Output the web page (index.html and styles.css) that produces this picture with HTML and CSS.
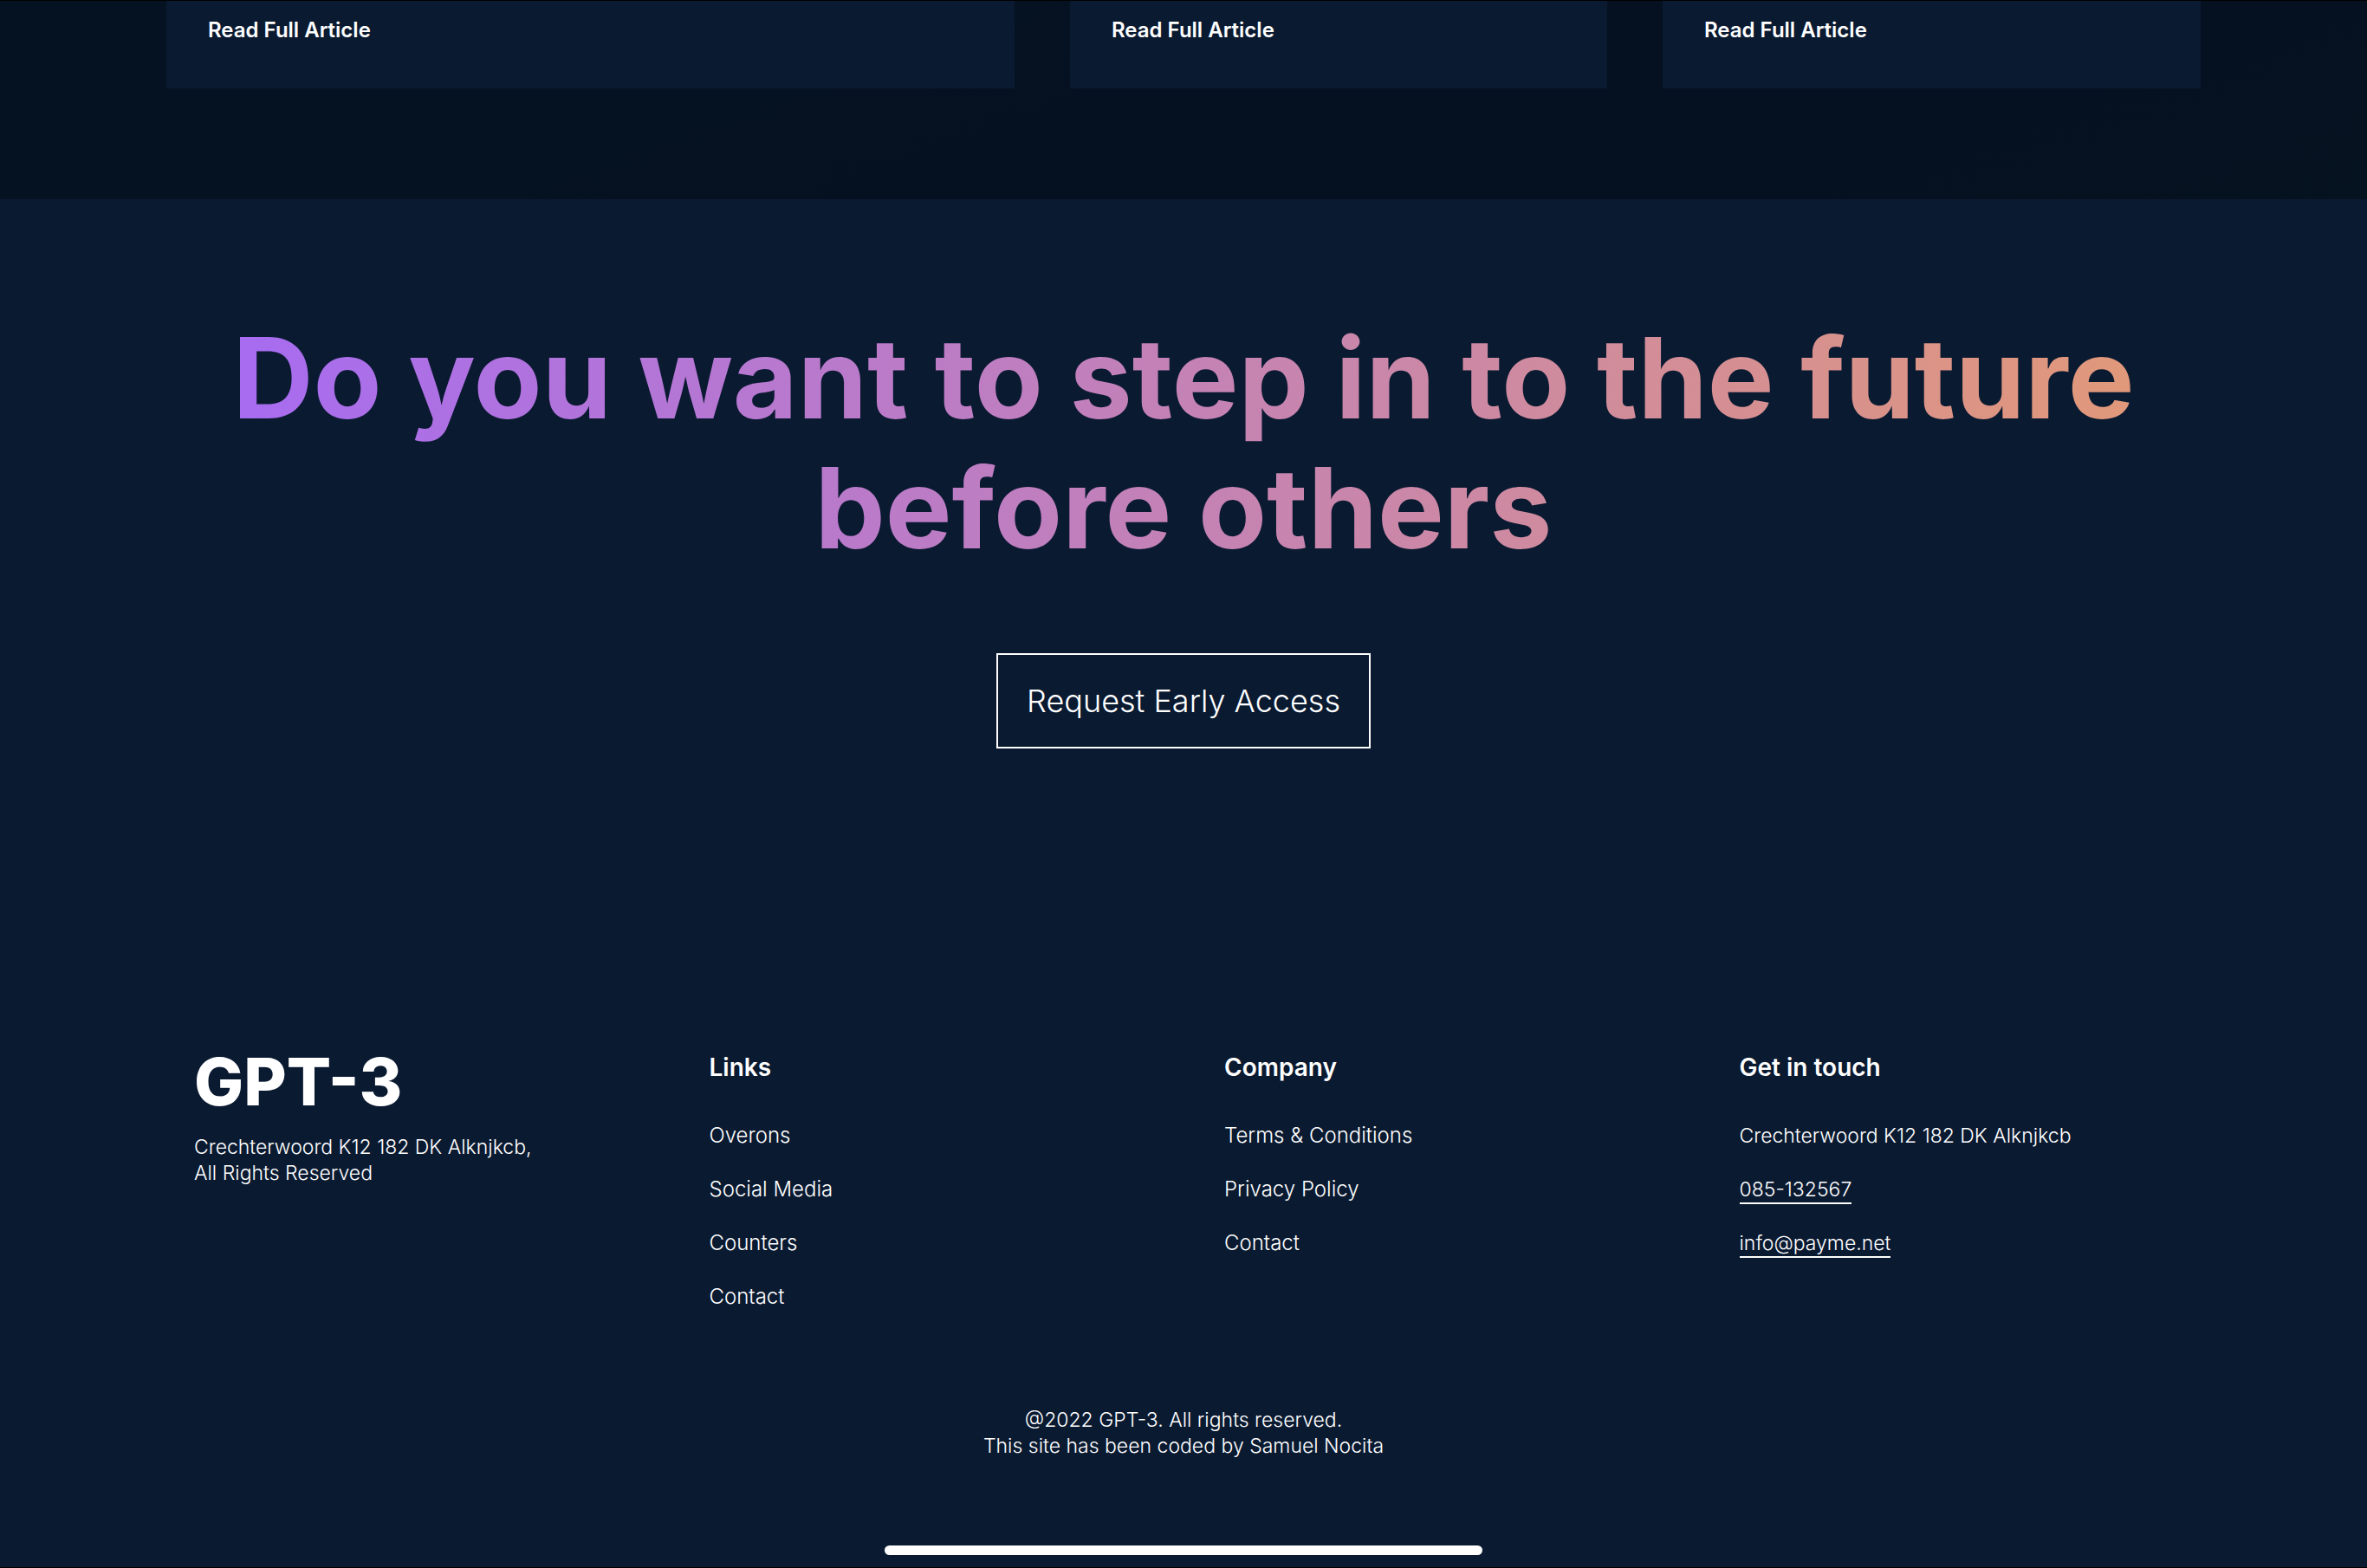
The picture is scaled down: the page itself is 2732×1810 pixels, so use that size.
FILE: index.html
```html
<!DOCTYPE html>
<html lang="en">
<head>
<meta charset="utf-8">
<meta name="viewport" content="width=device-width, initial-scale=1">
<title>GPT-3</title>
<link rel="stylesheet" href="styles.css">
</head>
<body>
<main class="blog">
  <article class="card"><a class="card-link" href="#">Read Full Article</a></article>
  <article class="card"><a class="card-link" href="#">Read Full Article</a></article>
  <article class="card"><a class="card-link" href="#">Read Full Article</a></article>
</main>
<footer class="footer">
  <section class="cta">
    <h1 class="cta-title">Do you want to step in to the future before others</h1>
    <button class="cta-button" type="button">Request Early Access</button>
  </section>
  <div class="columns">
    <div class="brand">
      <a class="logo" href="#">GPT-3</a>
      <p class="brand-text">Crechterwoord K12 182 DK Alknjkcb,<br>All Rights Reserved</p>
    </div>
    <nav class="column" aria-label="Links">
      <h2 class="column-title">Links</h2>
      <a class="item" href="#">Overons</a>
      <a class="item" href="#">Social Media</a>
      <a class="item" href="#">Counters</a>
      <a class="item" href="#">Contact</a>
    </nav>
    <nav class="column" aria-label="Company">
      <h2 class="column-title">Company</h2>
      <a class="item" href="#">Terms &amp; Conditions</a>
      <a class="item" href="#">Privacy Policy</a>
      <a class="item" href="#">Contact</a>
    </nav>
    <address class="column contact">
      <h2 class="column-title">Get in touch</h2>
      <p class="item">Crechterwoord K12 182 DK Alknjkcb</p>
      <a class="item underlined" href="tel:085132567">085-132567</a>
      <a class="item underlined" href="mailto:info@payme.net">info@payme.net</a>
    </address>
  </div>
  <p class="copyright">@2022 GPT-3. All rights reserved.<br>This site has been coded by Samuel Nocita</p>
  <div class="home-bar"></div>
</footer>
</body>
</html>
```
FILE: styles.css
```css
* {
  box-sizing: border-box;
  margin: 0;
}

body {
  display: flex;
  flex-direction: column;
  min-height: 100vh;
  border-top: 1px solid #000;
  border-bottom: 1px solid #000;
  background: #0a1a31;
  color: #fff;
  font-family: Inter, sans-serif;
  font-size: 24px;
  font-weight: 300;
  line-height: 30px;
}

a {
  color: inherit;
  text-decoration: none;
}

.blog {
  display: grid;
  grid-template-columns: 979fr 620fr 621fr;
  gap: 64px;
  padding: 0 192px 128px;
  background: linear-gradient(160deg, #051222 0%, #051221 35%, #051020 60%, #051220 100%);
}

.card {
  padding: 19px 48px 52px;
  background: #0a1a31;
}

.card-link {
  display: block;
  font-weight: 600;
}

.footer {
  display: flex;
  flex: 1;
  flex-direction: column;
  align-items: center;
}

.cta {
  display: flex;
  flex-direction: column;
  align-items: center;
  padding: 131px 192px 0;
}

.cta-title {
  background: linear-gradient(90deg, #a66bf2 2%, #e39a76 100%);
  background-clip: text;
  -webkit-background-clip: text;
  color: transparent;
  font-size: 129px;
  font-weight: 700;
  line-height: 150px;
  text-align: center;
}

.cta-button {
  height: 110px;
  margin-top: 93px;
  padding: 0 33px;
  border: 2px solid #fff;
  background: transparent;
  color: #fff;
  font: inherit;
  font-size: 36px;
}

.columns {
  display: grid;
  grid-template-columns: repeat(4, 1fr);
  gap: 60px;
  width: 100%;
  padding: 346px 190px 0 224px;
}

.brand {
  display: flex;
  flex-direction: column;
  align-items: flex-start;
}

.logo {
  font-size: 76px;
  font-weight: 800;
  line-height: 76px;
}

.brand-text {
  margin-top: 23px;
  font-size: 23px;
}

.column {
  display: flex;
  flex-direction: column;
  align-items: flex-start;
  gap: 32px;
  padding-top: 6px;
  font-style: normal;
}

.contact {
  font-size: 23px;
}

.column-title {
  margin-bottom: 16px;
  font-size: 28px;
  font-weight: 600;
  line-height: 32px;
}

.underlined {
  margin-bottom: -2px;
  border-bottom: 2px solid #fff;
}

.copyright {
  margin-top: 112px;
  font-size: 23px;
  text-align: center;
}

.home-bar {
  width: 690px;
  height: 11px;
  margin-top: auto;
  margin-bottom: 14px;
  border-radius: 6px;
  background: #fff;
}
```
